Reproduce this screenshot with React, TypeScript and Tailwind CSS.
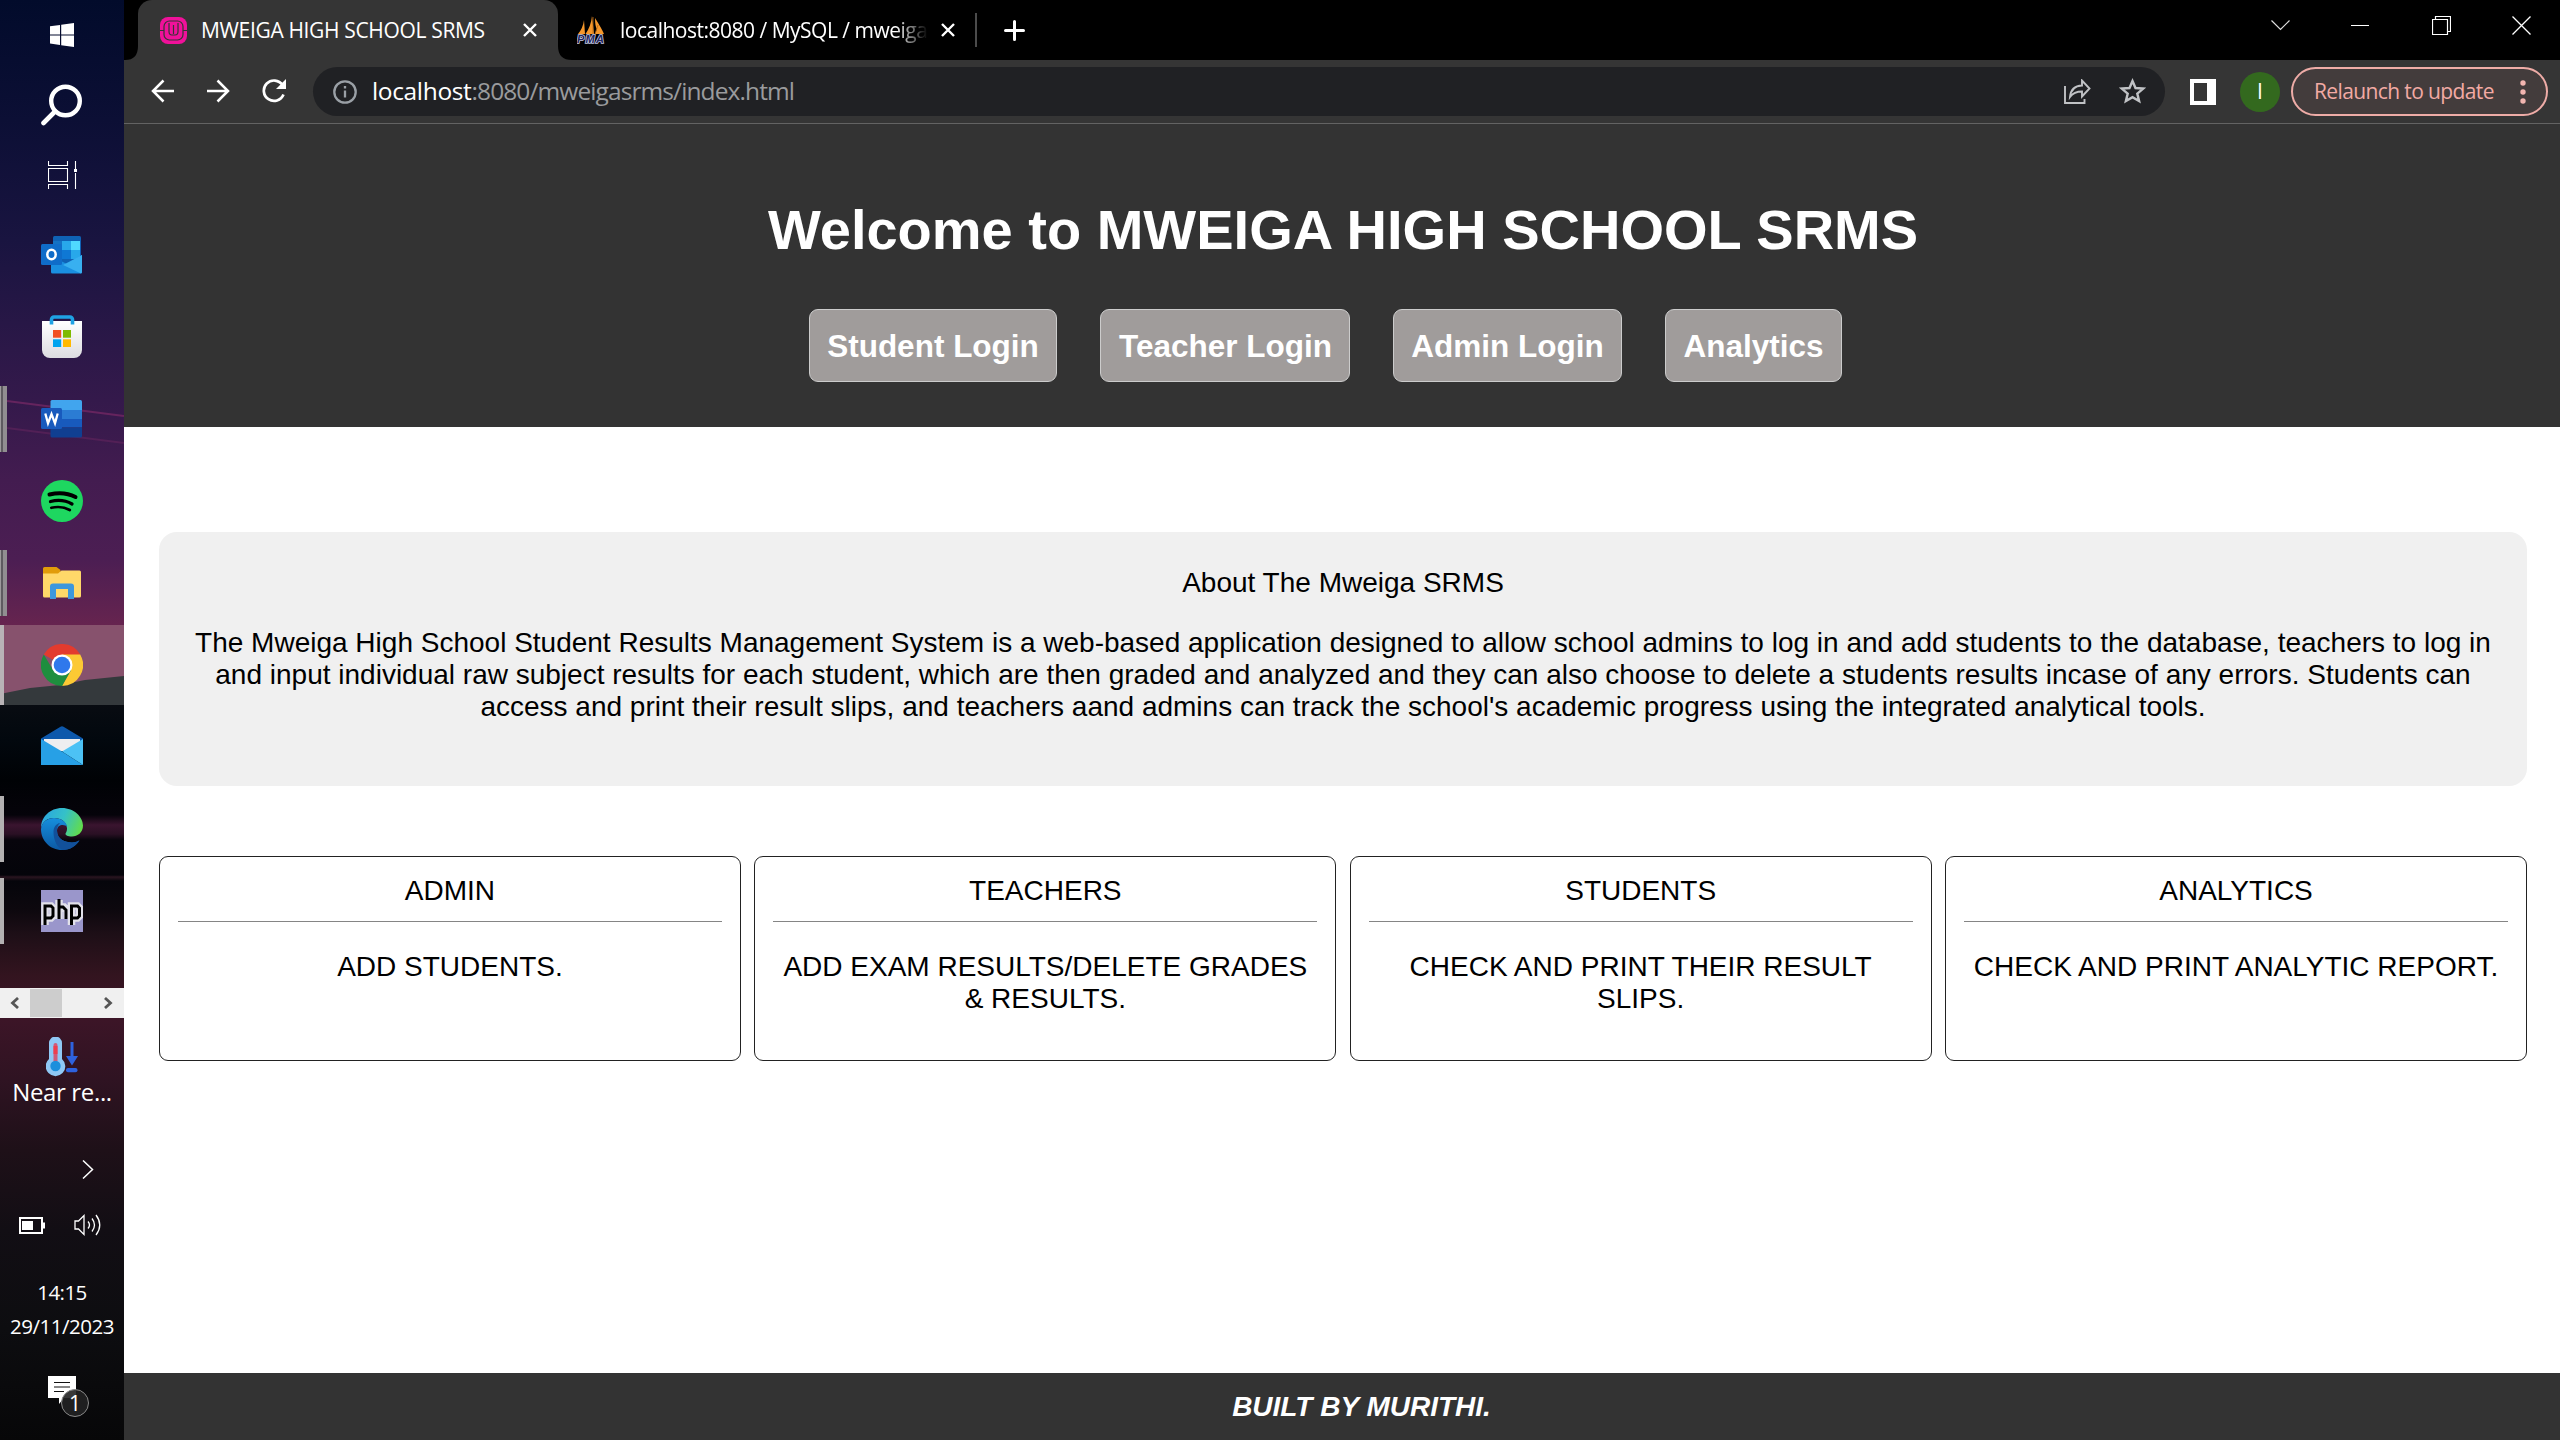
import React from "react";

const ui = "font-['Open_Sans','Noto_Sans',sans-serif]";

/* ---------- taskbar icons ---------- */

function WindowsLogo() {
  return (
    <svg width="24" height="24" viewBox="0 0 24 24" fill="#fff">
      <path d="M0 3.3 10 2v9.4H0zM11.2 1.8 24 0v11.4H11.2zM0 12.5h10V22L0 20.6zM11.2 12.5H24V24l-12.8-1.8z" />
    </svg>
  );
}

function SearchIcon() {
  return (
    <svg width="42" height="42" viewBox="0 0 42 42" fill="none" stroke="#fff">
      <circle cx="24.500" cy="17" r="14.300" strokeWidth="4.400" />
      <path d="M14 27.500 2.500 39" strokeWidth="4.600" strokeLinecap="round" />
    </svg>
  );
}

function TaskViewIcon() {
  return (
    <svg width="29" height="28" viewBox="0 0 29 28" fill="none" stroke="#fff" strokeWidth="1.100">
      <path d="M.5 0v4.500h19V0M.5 28v-4.500h19V28M.5 7.500h19v13H.5zM27.500 0v8M27.500 12v16" />
      <path d="M26 8h3v3h-3z" fill="#fff" stroke="none" />
    </svg>
  );
}

function OutlookIcon() {
  return (
    <svg width="42" height="38" viewBox="0 0 42 38">
      <rect x="12" y="0" width="28" height="30" rx="1.500" fill="#0f62b5" />
      <path d="M12 5h9v9h-9z" fill="#1472c4" />
      <path d="M21 5h9v9h-9z" fill="#28a8ea" />
      <path d="M30 5h9v9h-9z" fill="#50d9ff" />
      <path d="M21 14h9v9h-9z" fill="#0f78d4" />
      <path d="M30 14h9v9h-9z" fill="#28a8ea" />
      <path d="M10 20l16 8 15-9v17a1.500 1.500 0 0 1-1.500 1.500h-28A1.500 1.500 0 0 1 10 36z" fill="#1a8fe0" />
      <path d="M41 19v17a1.500 1.500 0 0 1-1 1.400L22 29z" fill="#38b0f0" />
      <rect x="0" y="8" width="21" height="21" rx="1.500" fill="#0f6cc9" />
      <ellipse cx="10.500" cy="18.500" rx="4.200" ry="4.700" fill="none" stroke="#fff" strokeWidth="2.500" />
    </svg>
  );
}

function StoreIcon() {
  return (
    <svg className="mb-[2px]" width="40" height="43" viewBox="0 0 40 43">
      <defs>
        <linearGradient id="bag" x1="0" y1="0" x2="0" y2="1">
          <stop offset="0" stopColor="#ffffff" />
          <stop offset="1" stopColor="#dcdce0" />
        </linearGradient>
      </defs>
      <path d="M0 6h40v29a8 8 0 0 1-8 8H8a8 8 0 0 1-8-8z" fill="url(#bag)" />
      <path d="M9.500 9.500V4.500a2.500 2.500 0 0 1 2.500-2.500h16a2.500 2.500 0 0 1 2.500 2.500v5" fill="none" stroke="#1fa2e4" strokeWidth="3.600" />
      <path d="M11 15h8.200v7.700H11z" fill="#f25022" />
      <path d="M21 15h8v7.700h-8z" fill="#7fba00" />
      <path d="M11 24.300h8.200V32H11z" fill="#00a4ef" />
      <path d="M21 24.300h8V32h-8z" fill="#ffb900" />
    </svg>
  );
}

function WordIcon() {
  return (
    <svg width="42" height="38" viewBox="0 0 42 38">
      <path d="M11 0h28.500A1.500 1.500 0 0 1 41 1.500V10H9.500V1.500A1.500 1.500 0 0 1 11 0z" fill="#41a5ee" />
      <path d="M9.500 10H41v9H9.500z" fill="#2b7cd3" />
      <path d="M9.500 19H41v8.500H9.500z" fill="#185abd" />
      <path d="M9.500 27.500H41V36a1.500 1.500 0 0 1-1.500 1.500H11A1.500 1.500 0 0 1 9.500 36z" fill="#103f91" />
      <rect x="0" y="8" width="21" height="21" rx="1.500" fill="#185abd" />
      <path d="M4.300 13.500 7 23.300 10.500 14l3.500 9.300 2.700-9.800" fill="none" stroke="#fff" strokeWidth="2.300" />
    </svg>
  );
}

function SpotifyIcon() {
  return (
    <svg width="42" height="42" viewBox="0 0 42 42" fill="none" stroke="#000" strokeLinecap="round">
      <circle cx="21" cy="21" r="21" fill="#1ed760" stroke="none" />
      <path d="M8.500 14.500q14.500-3.500 26 2.500" strokeWidth="4" />
      <path d="M9.500 21.500q12-3 21.500 2.500" strokeWidth="3.300" />
      <path d="M10.300 27.800q10.500-2.300 18.500 2.200" strokeWidth="2.700" />
    </svg>
  );
}

function FolderIcon() {
  return (
    <svg width="38" height="32" viewBox="0 0 38 32">
      <path d="M1.500 0h12l4 3v6H0V1.500A1.500 1.500 0 0 1 1.500 0z" fill="#e19c0a" />
      <path d="M0 6.500h15l3.500-3H36.500A1.500 1.500 0 0 1 38 5v24a1.500 1.500 0 0 1-1.500 1.500h-35A1.500 1.500 0 0 1 0 29z" fill="#ffd869" />
      <path d="M7 32V19.500a3 3 0 0 1 3-3h18a3 3 0 0 1 3 3V32h-6V22H13v10z" fill="#3d97dc" />
    </svg>
  );
}

function ChromeIcon() {
  return (
    <svg width="42" height="42" viewBox="0 0 42 42">
      <path d="M21 21 2.800 10.500A21 21 0 0 1 39.200 10.500z" fill="#e33b2e" />
      <path d="M21 10.500h18.200A21 21 0 0 1 21 42l9-16z" fill="#fcc934" />
      <path d="M2.800 10.500A21 21 0 0 0 21 42l9-15.700-18-.3z" fill="#1e8e3e" />
      <circle cx="21" cy="21" r="10.500" fill="#fff" />
      <circle cx="21" cy="21" r="8.300" fill="#2f78ec" />
    </svg>
  );
}

function MailIcon() {
  return (
    <svg className="mb-[4px]" width="42" height="39" viewBox="0 0 42 39">
      <path d="M0 12.500 19.500.8q1.500-.9 3 0L42 12.500V16H0z" fill="#0d58ab" />
      <path d="M3 13h36v12H3z" fill="#eeeef0" />
      <path d="M42 13v26L21 25.500z" fill="#4cc2f5" />
      <path d="M0 13v26h42L21 25.500z" fill="#27a0e6" />
    </svg>
  );
}

function EdgeIcon() {
  return (
    <svg width="42" height="42" viewBox="0 0 42 42">
      <defs>
        <linearGradient id="edgeTop" x1="0" y1="0.300" x2="1" y2="0.600">
          <stop offset="0" stopColor="#2aa6e0" />
          <stop offset="0.500" stopColor="#35c1c8" />
          <stop offset="1" stopColor="#62dc4c" />
        </linearGradient>
        <linearGradient id="edgeLeft" x1="0" y1="0" x2="0" y2="1">
          <stop offset="0" stopColor="#168fdd" />
          <stop offset="1" stopColor="#0c59a4" />
        </linearGradient>
      </defs>
      <path d="M0 20C0 9 9 0 21 0s21 9 21 17.500c0 7-5.500 11-11 11-4.500 0-6.500-1.500-6.500-2.500s1.500-2 1.500-5.500C26 14 20 10 13 10 6 10 1.500 14 0 20z" fill="url(#edgeTop)" />
      <path d="M0 21C1 14 6 10 13 10c7 0 13 4 13 9-2-3-10-3-10 4 0 8 8 11.500 15 11.500 3 0 6-1 7.500-2C35 38 29 42 21 42 9 42 0 32.500 0 21z" fill="url(#edgeLeft)" />
      <path d="M12.500 24c0-5 3-8.500 6.500-9-2 2-3 4.500-3 7.500 0 8.500 8 12 15 12 3 0 5.500-1 7.500-2.500C35 38 29 42 22.500 42c-6-1.500-10-9.500-10-18z" fill="#12509a" />
    </svg>
  );
}

function PhpIcon() {
  return (
    <span className="flex h-[42px] w-[42px] items-center justify-center overflow-hidden bg-[#9a96cb]">
      <svg width="42" height="42" viewBox="0 0 42 42" fill="none">
        <g stroke="#e2e1ea" strokeWidth="7.500">
          <path d="M4 35V16h6l2 2v8l-2 2H6M18 10v19M18 17h5l3 3v9M30.500 35V16h6l2 2v8l-2 2h-5" />
        </g>
        <g stroke="#000" strokeWidth="3">
          <path d="M4 35V16h6l2 2v8l-2 2H5M18 9v20M18 17h4l3 3v9M30.500 35V16h6l2 2v8l-2 2h-5" />
        </g>
      </svg>
    </span>
  );
}

function TaskSlot({ children, marker = "none" }: { children: React.ReactNode; marker?: "none" | "single" | "stacked" }) {
  return (
    <div className="relative flex h-[82px] shrink-0 items-center justify-center">
      {marker === "single" && <span className="absolute left-0 top-2 h-[66px] w-1 bg-[#b3b1b2]" />}
      {marker === "stacked" && (
        <span className="absolute left-0 top-2 flex h-[66px]">
          <i className="w-px bg-[#9d9a9c]" />
          <i className="w-0.5 bg-[#5e5b60]" />
          <i className="w-1 bg-[#918e91]" />
        </span>
      )}
      {children}
    </div>
  );
}

function Taskbar() {
  return (
    <aside
      className={
        "relative flex h-full w-[124px] shrink-0 flex-col bg-[linear-gradient(180deg,#020b2b_0px,#0c0f35_120px,#191440_240px,#2c1848_350px,#34194b_400px,#431c50_480px,#4c1e53_560px,#66244f_625px,#733054_670px,#7a3358_684px,#090c12_700px,#02080e_740px,#000205_780px,#05030a_815px,#3a142f_825px,#2a1024_834px,#07050c_840px,#04040a_875px,#2a1520_877px,#05050b_881px,#0d080e_910px,#1e0f17_935px,#33141f_975px,#3c1527_1020px,#2f1322_1080px,#1e1018_1150px,#120e14_1230px,#0d0d10_1330px,#070708_1440px)] text-white " +
        ui
      }
    >
      <svg className="absolute left-0 top-[390px]" width="124" height="70" fill="none">
        <path d="M7 11 124 26" stroke="#7a2a66" strokeWidth="2" opacity=".7" />
        <path d="M7 38 124 53" stroke="#6a2560" strokeWidth="2" opacity=".5" />
      </svg>
      <div className="flex h-[70px] shrink-0 items-center justify-center"><WindowsLogo /></div>
      <div className="flex h-[69px] shrink-0 items-center justify-center"><SearchIcon /></div>
      <div className="mb-1 flex h-[71px] shrink-0 items-center justify-center"><TaskViewIcon /></div>
      <TaskSlot><OutlookIcon /></TaskSlot>
      <TaskSlot><StoreIcon /></TaskSlot>
      <TaskSlot marker="stacked"><WordIcon /></TaskSlot>
      <TaskSlot><SpotifyIcon /></TaskSlot>
      <TaskSlot marker="stacked"><FolderIcon /></TaskSlot>
      <div className="relative my-px flex h-20 shrink-0 items-center justify-center overflow-hidden bg-[#87526d]">
        <svg className="absolute left-0 top-0" width="124" height="80">
          <path d="M0 69 30 63 60 60 85 55 124 51V80H0z" fill="#34393c" />
          <path d="M0 0h4v80H0z" fill="#b8b3b6" />
        </svg>
        <span className="relative"><ChromeIcon /></span>
      </div>
      <TaskSlot><MailIcon /></TaskSlot>
      <TaskSlot marker="single"><EdgeIcon /></TaskSlot>
      <TaskSlot marker="single"><PhpIcon /></TaskSlot>

      <div className="mt-9 flex h-[30px] shrink-0 items-center bg-[#f0f0f0]">
        <svg className="ml-[10px]" width="9" height="12" fill="none" stroke="#555" strokeWidth="2.800"><path d="M8 1 2.500 6 8 11" /></svg>
        <span className="ml-[11px] h-7 w-8 bg-[#cdcdcd]" />
        <svg className="ml-[42px]" width="9" height="12" fill="none" stroke="#555" strokeWidth="2.800"><path d="M1 1l5.500 5L1 11" /></svg>
      </div>

      <svg className="ml-[46px] mt-[19px] shrink-0" width="32" height="40" viewBox="0 0 32 40">
        <path d="M3 6a6.500 6.500 0 0 1 13 0v16a9.800 9.800 0 1 1-13 0z" fill="#8fc8f5" />
        <rect x="7.500" y="6" width="4" height="20" rx="2" fill="#d05a78" />
        <rect x="7.500" y="9" width="4" height="8" fill="#ee3e4e" />
        <circle cx="9.500" cy="29" r="5.200" fill="#1b8fdc" />
        <path d="M24.500 5h3v14h4.500l-6 9.500-6-9.500h4.500z" fill="#2e62de" />
        <rect x="20" y="31" width="11.500" height="4.200" rx="2" fill="#2e62de" />
      </svg>
      <div className="-mt-px mb-[2px] h-8 shrink-0 whitespace-nowrap text-center text-[24px] leading-8 tracking-[-0.350px]">Near re...</div>
      <svg className="ml-[82px] mt-[50px] shrink-0" width="12" height="19" fill="none" stroke="#fff" strokeWidth="1.500"><path d="M1 .5 10.500 9.500 1 18.500" /></svg>
      <div className="mt-[34px] flex h-[24px] shrink-0 items-center">
        <svg className="ml-[19px]" width="26" height="17" viewBox="0 0 26 17">
          <rect x="1" y="1" width="22" height="15" fill="none" stroke="#fff" strokeWidth="2" />
          <path d="M3 4h11v9H3zM24 5.500h2v6h-2z" fill="#fff" />
        </svg>
        <svg className="ml-[29px]" width="28" height="24" viewBox="0 0 28 24" fill="none" stroke="#fff" strokeWidth="1.300">
          <path d="M1 8h3.500L10 2.500v19L4.500 16H1z" />
          <path d="M14 8.500q3 3.500 0 7M18 5.500q5 6.500 0 13M22 2q7.500 10 0 20" />
        </svg>
      </div>
      <div className="mt-[38px] h-[34px] shrink-0 text-center text-[20.500px] leading-[34px] tracking-[-0.600px]">14:15</div>
      <div className="h-[34px] shrink-0 whitespace-nowrap text-center text-[20.500px] leading-[34px] tracking-[-0.500px]">29/11/2023</div>
      <div className="relative ml-12 mt-[33px] h-10 w-10 shrink-0">
        <svg width="28" height="28" viewBox="0 0 28 28">
          <path d="M0 0h28v22H16l-5 6v-6H0z" fill="#fff" />
          <path d="M6 6.500h16M6 11h16M6 15.500h10" stroke="#111" strokeWidth="1.200" />
        </svg>
        <span className="absolute left-[13px] top-[13px] flex h-[28px] w-[28px] items-center justify-center rounded-full border border-[#8a8a8a] bg-[#222]/90 text-[21px] leading-none">1</span>
      </div>
    </aside>
  );
}

/* ---------- browser chrome ---------- */

function TabClose() {
  return (
    <svg className="shrink-0" width="14" height="14" fill="none" stroke="#fff" strokeWidth="2.400"><path d="M1 1l12 12M13 1 1 13" /></svg>
  );
}

function WampIcon() {
  return (
    <svg className="shrink-0" width="27" height="27" viewBox="0 0 27 27">
      <rect width="27" height="27" rx="8" fill="#f0119a" />
      <rect x="4" y="4" width="19" height="19" rx="5.500" fill="none" stroke="#353535" strokeWidth="1.200" />
      <path d="M0 13.500h4M23 13.500h4" stroke="#353535" strokeWidth="1.200" />
      <path d="M9 6v8.500q0 3.500 3 3.500h3q3 0 3-3.500V6M13.500 8v9" fill="none" stroke="#353535" strokeWidth="1.200" />
    </svg>
  );
}

function PmaIcon() {
  return (
    <svg className="shrink-0" width="28" height="28" viewBox="0 0 28 28">
      <path d="M7 4Q6 12 1 18h7zM15 0Q14 10 8.500 18H17zM18 2q0 9 2 11l-2 5h9Q25 13 18 2z" fill="#f5972b" />
      <path d="M16 1v17M21 9l-3 9" stroke="#b96a14" strokeWidth=".8" />
      <text x="0" y="27.200" fontFamily="Liberation Sans" fontSize="11" fontWeight="bold" fontStyle="italic" fill="#22265e" stroke="#c6c9e2" strokeWidth="1.600" paintOrder="stroke" textLength="27">PMA</text>
    </svg>
  );
}

function TabStrip() {
  return (
    <div className={"flex h-[60px] shrink-0 items-start bg-black text-[21px] leading-[28px] text-white " + ui}>
      <svg className="ml-px mt-[46px] shrink-0" width="13" height="14"><path d="M13 0v14H0Q13 14 13 0z" fill="#353535" /></svg>
      <div className="flex h-[60px] w-[420px] shrink-0 items-center rounded-t-[14px] bg-[#353535] pl-[22px]">
        <WampIcon />
        <span className="mb-px ml-[14px] w-[322px] whitespace-nowrap text-[21px] tracking-[-0.340px]">MWEIGA HIGH SCHOOL SRMS</span>
        <TabClose />
      </div>
      <svg className="mt-[46px] shrink-0" width="14" height="14"><path d="M0 0v14h14Q0 14 0 0z" fill="#353535" /></svg>
      <div className="ml-[5px] flex h-[60px] items-center">
        <PmaIcon />
        <span className="mb-px ml-[15px] w-[308px] whitespace-nowrap text-[21px] tracking-[-0.500px] [mask-image:linear-gradient(90deg,#000_275px,transparent_308px)]">localhost:8080 / MySQL / mweiga</span>
        <span className="ml-[13px] flex"><TabClose /></span>
        <span className="ml-[20px] h-[34px] w-0.5 bg-[#4b4b4b]" />
        <svg className="ml-[27px]" width="21" height="21" stroke="#fff" strokeWidth="3" strokeLinecap="round"><path d="M10.500 1.500v18M1.500 10.500h18" /></svg>
      </div>
      <div className="ml-auto mr-[29px] flex h-[50px] items-center">
        <svg width="19" height="11" fill="none" stroke="#ddd" strokeWidth="1.200"><path d="M.5.5l9 9 9-9" /></svg>
        <span className="ml-[61px] h-px w-[18px] bg-white" />
        <svg className="ml-[63px]" width="19" height="19" fill="none" stroke="#fff" strokeWidth="1.200"><path d="M.5 3.500h15v15H.5zM3.500 3.500V.5h15v15h-3" /></svg>
        <svg className="ml-[61px]" width="19" height="19" fill="none" stroke="#fff" strokeWidth="1.300"><path d="M.5.5l18 18M18.500.5l-18 18" /></svg>
      </div>
    </div>
  );
}

function Toolbar() {
  return (
    <div className={"flex h-[64px] shrink-0 items-center border-b border-[#636363] bg-[#353535] " + ui}>
      <svg className="mb-px ml-[27px] shrink-0" width="24" height="24" fill="none" stroke="#fff" strokeWidth="2.500"><path d="M23 12H2M12.500 1.500 2 12l10.500 10.500" /></svg>
      <svg className="mb-px ml-[31px] shrink-0" width="24" height="24" fill="none" stroke="#fff" strokeWidth="2.500"><path d="M1 12h21M11.500 1.500 22 12 11.500 22.500" /></svg>
      <svg className="mb-px ml-[32px] shrink-0" width="25" height="24" viewBox="0 0 25 24" fill="none" stroke="#fff" strokeWidth="2.700">
        <path d="M20.500 6A10.200 10.200 0 1 0 21.500 15.500" />
        <path d="M24 0v10H14z" fill="#fff" stroke="none" />
      </svg>
      <div className="ml-[26px] flex h-[49px] w-[1852px] shrink-0 items-center rounded-full bg-[#202124] pl-[20px]">
        <svg width="24" height="24" fill="none" stroke="#9aa0a6" strokeWidth="2.300"><circle cx="12" cy="12" r="10.700" /><path d="M12 10.500v7M12 6v2.500" /></svg>
        <span className="mb-[2px] ml-[15px] whitespace-nowrap text-[24.500px] leading-[34px] tracking-[-0.900px] text-[#9a9b9d]"><span className="tracking-[-0.350px] text-white">localhost</span>:8080/mweigasrms/index.html</span>
        <svg className="ml-auto" width="27" height="25" viewBox="0 0 27 25" fill="none" stroke="#c0c2c5" strokeWidth="1.900">
          <path d="M1 7v17h19.500v-4" />
          <path d="M6 18Q7 7 18 6.500V1.500l7.500 8-7.500 8v-5Q10 12.500 6 18z" />
        </svg>
        <svg className="mb-px ml-[28px] mr-[19px]" width="27" height="26" viewBox="0 0 27 26" fill="none" stroke="#c0c2c5" strokeWidth="2.400">
          <path d="M13.500 3l3 7 7.700.6-5.900 5 1.800 7.500-6.600-4-6.600 4 1.800-7.500-5.900-5 7.700-.6z" />
        </svg>
      </div>
      <svg className="ml-[25px] shrink-0" width="26" height="26"><path d="M0 0h26v26H0zM4 4v18h13V4z" fill="#fff" fillRule="evenodd" /></svg>
      <span className="ml-[24px] flex h-[40px] w-[40px] shrink-0 items-center justify-center rounded-full bg-[#33691e] text-[21px] text-white">I</span>
      <div className="ml-[11px] flex h-[49px] w-[257px] shrink-0 items-center rounded-full border-2 border-[#eeaca7] bg-[#433c3c] pl-[21px] text-[#f2aaa4]">
        <span className="mb-[2px] w-[206px] shrink-0 whitespace-nowrap text-[21px] leading-[28px] tracking-[-0.620px]">Relaunch to update</span>
        <svg className="shrink-0" width="6" height="24" fill="#f2b5b0"><circle cx="3" cy="3" r="2.700" /><circle cx="3" cy="12" r="2.700" /><circle cx="3" cy="21" r="2.700" /></svg>
      </div>
    </div>
  );
}

/* ---------- page ---------- */

const links = [
  { label: "Student Login", width: "w-[248px]" },
  { label: "Teacher Login", width: "w-[250px] pl-px" },
  { label: "Admin Login", width: "w-[229px]" },
  { label: "Analytics", width: "w-[177px]" },
];

const cards = [
  { title: "ADMIN", lines: ["ADD STUDENTS."] },
  { title: "TEACHERS", lines: ["ADD EXAM RESULTS/DELETE GRADES", "& RESULTS."] },
  { title: "STUDENTS", lines: ["CHECK AND PRINT THEIR RESULT", "SLIPS."] },
  { title: "ANALYTICS", lines: ["CHECK AND PRINT ANALYTIC REPORT."] },
];

function Page() {
  return (
    <div className="flex min-h-0 flex-1 flex-col bg-white text-center font-['Liberation_Sans',Arial,sans-serif] text-[28px] leading-8 text-black">
      <header className="h-[303px] shrink-0 bg-[#333] pt-[74px] text-white">
        <h1 className="pl-0.5 text-[56px] font-bold leading-[64px]">Welcome to MWEIGA HIGH SCHOOL SRMS</h1>
        <nav className="ml-[685px] mt-[47px] flex gap-[43px]">
          {links.map((l) => (
            <a key={l.label} className={"flex h-[73px] items-center justify-center whitespace-nowrap rounded-[9px] border border-[#ccc] bg-[#a09c9b] text-[31.500px] font-bold leading-9 " + l.width}>
              {l.label}
            </a>
          ))}
        </nav>
      </header>
      <main className="flex-1 pl-[35px] pr-[33px] pt-[105px]">
        <section className="h-[254px] rounded-[18px] bg-[#f0f0f0] pt-[35px]">
          <h2>About The Mweiga SRMS</h2>
          <p className="mt-7 whitespace-nowrap">
            The Mweiga High School Student Results Management System is a web-based application designed to allow school admins to log in and add students to the database, teachers to log in
            <br />
            and input individual raw subject results for each student, which are then graded and analyzed and they can also choose to delete a students results incase of any errors. Students can
            <br />
            access and print their result slips, and teachers aand admins can track the school's academic progress using the integrated analytical tools.
          </p>
        </section>
        <section className="mt-[70px] grid grid-cols-4 gap-x-[13.400px]">
          {cards.map((c) => (
            <article key={c.title} className="h-[205px] rounded-[9px] border border-[#222] px-[18px] pt-[18px]">
              <h3>{c.title}</h3>
              <hr className="mt-[14px] border-t border-[#858585]" />
              <p className="-mx-4 mt-[29px] whitespace-nowrap">
                {c.lines.map((line) => (
                  <span key={line} className="block">{line}</span>
                ))}
              </p>
            </article>
          ))}
        </section>
      </main>
      <footer className="h-[67px] shrink-0 bg-[#333] pl-[39px] pt-[18px] font-bold italic text-white">BUILT BY MURITHI.</footer>
    </div>
  );
}

export default function App() {
  return (
    <div className="flex h-[1440px] w-[2560px] overflow-hidden bg-black">
      <Taskbar />
      <div className="flex min-w-0 flex-1 flex-col">
        <TabStrip />
        <Toolbar />
        <Page />
      </div>
    </div>
  );
}
